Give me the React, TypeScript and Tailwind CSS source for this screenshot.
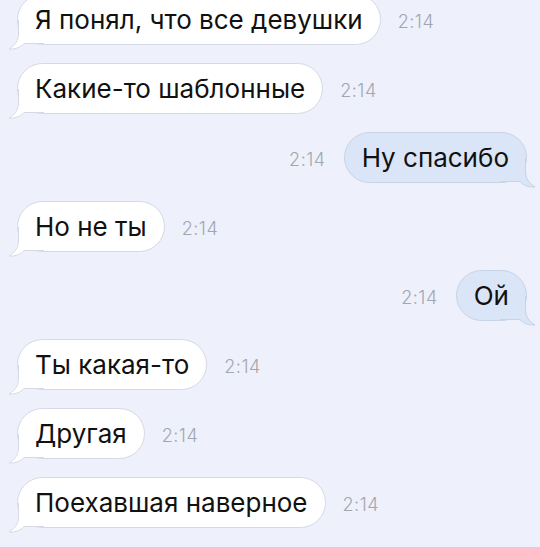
import React from "react";

type Msg = { text: string; out?: boolean };

const msgs: Msg[] = [
  { text: "Я понял, что все девушки" },
  { text: "Какие-то шаблонные" },
  { text: "Ну спасибо", out: true },
  { text: "Но не ты" },
  { text: "Ой", out: true },
  { text: "Ты какая-то" },
  { text: "Другая" },
  { text: "Поехавшая наверное" },
];

function Tail({ out }: { out?: boolean }) {
  const fill = out ? "#dbe5f8" : "#ffffff";
  const stroke = out ? "#c9d3e6" : "#d6d9e3";
  return (
    <svg
      width="36"
      height="30"
      viewBox="0 0 36 30"
      className={
        out
          ? "absolute right-[-10px] bottom-[-6px] -scale-x-100"
          : "absolute left-[-10px] bottom-[-6px]"
      }
    >
      <path d="M10 0 L10 14 C10 20 7 25 0.5 29 C6 29.5 12 28 16 24 L36 24 L36 0 Z" fill={fill} />
      <path
        d="M10.5 0 L10.5 14 C10.5 20 7.5 25 1 29 C6 29.5 12 28 16 23.5 L36 23.5"
        fill="none"
        stroke={stroke}
        strokeWidth="1"
      />
    </svg>
  );
}

function Time() {
  return (
    <span className="text-[18px] leading-none text-[#a2a6b0] pt-[4px] tracking-[0.5px] font-light">2:14</span>
  );
}

function Bubble({ m }: { m: Msg }) {
  return (
    <div
      className={
        "relative rounded-[26px] border px-[17px] py-[10px] text-[26px] leading-[29px] text-[#111] whitespace-nowrap " +
        (m.out ? "bg-[#dbe5f8] border-[#c9d3e6]" : "bg-white border-[#d6d9e3]")
      }
    >
      <span className="relative z-10">{m.text}</span>
      <Tail out={m.out} />
    </div>
  );
}

export default function App() {
  return (
    <div
      className="w-[540px] h-[547px] overflow-hidden bg-[#eef1fb]"
      style={{ fontFamily: "Inter, 'Noto Sans', sans-serif" }}
    >
      <div className="flex flex-col gap-[18px] mt-[-6px]">
        {msgs.map((m, i) =>
          m.out ? (
            <div key={i} className="flex items-center justify-end gap-[18px] pr-[13px]">
              <Time />
              <Bubble m={m} />
            </div>
          ) : (
            <div key={i} className="flex items-center gap-[17px] pl-[17px]">
              <Bubble m={m} />
              <Time />
            </div>
          )
        )}
      </div>
    </div>
  );
}
